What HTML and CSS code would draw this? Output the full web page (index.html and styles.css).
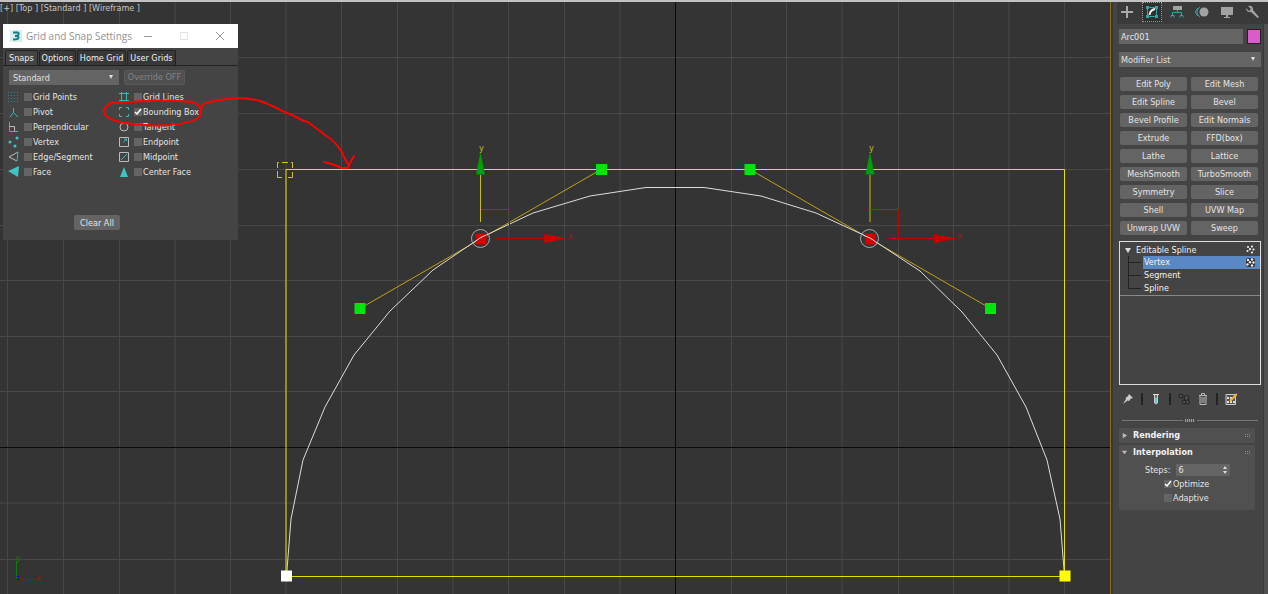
FILE: index.html
```html
<!DOCTYPE html>
<html lang="en">
<head>
<meta charset="utf-8">
<title>Grid and Snap Settings</title>
<link rel="stylesheet" href="styles.css">
</head>
<body>
<div class="app">
<main class="viewport">
  <svg class="scene" viewBox="0 0 1110 594" preserveAspectRatio="xMinYMin slice" aria-label="Top wireframe view">
    <path class="grid" d="M7.5 0V594M63.5 0V594M119.5 0V594M175 0V594M230.5 0V594M286 0V594M341.5 0V594M397.5 0V594M453 0V594M508.5 0V594M564.5 0V594M620 0V594M731.5 0V594M786.5 0V594M842 0V594M898.5 0V594M953.5 0V594M1009 0V594M1064.5 0V594M0 57.5H1110M0 113.5H1110M0 169.5H1110M0 225.5H1110M0 280.5H1110M0 336.5H1110M0 391.5H1110M0 503H1110M0 559.5H1110"/>
    <path class="axis" d="M675.5 0V594M0 447.5H1110"/>
    <path class="tangent" d="M360 308.5 601 169.5M750 169.5 990.5 308.5"/>
    <path class="arc" d="M286.5 576 291 519 303 460 325 407 354 355 390 311 433 270 480 238 533 213 590 196 646 187.5H704L761 196 816 213 870 238 920 271 962 312 997 355 1026 407 1047 460 1060 519 1064.5 576"/>
    <path class="bounds" d="M286 169.5H1064.5V576.5H286Z"/>
    <path class="snap" d="M277.5 168V162.5H279M282 162.5H288M291 162.5H292.5V168M277.5 171V177.5H282M288 177.5H292.5V172"/>
    <path class="handle" d="M596 164h11v11h-11zM744.5 164h11v11h-11zM354.5 303h11v11h-11zM985 303h11v11h-11z"/>
    <g>
      <path class="yellow-line" d="M480.5 175V222"/>
      <path class="green-line" d="M481 209.5H509"/>
      <path class="red-line" d="M509.5 209V238M498 238.5H546"/>
      <path fill="#009e00" d="M480.5 152 485 174.5H476Z"/>
      <path fill="#c90000" d="M567 238.5 544 234V243Z"/>
      <path fill="#d40000" d="M475.5 233.5h11v11h-11z"/>
      <circle cx="480.5" cy="238.5" r="9" fill="none" stroke="#aaa"/>
      <text x="479" y="151" fill="#c5bd20">y</text>
      <text x="568" y="239" fill="#a31515">x</text>
    </g>
    <g>
      <path class="yellow-line" d="M870 175V222"/>
      <path class="green-line" d="M870 209.5H898"/>
      <path class="red-line" d="M898.5 209V238M888 238.5H936"/>
      <path fill="#009e00" d="M870 152 874.5 174.5H865.5Z"/>
      <path fill="#c90000" d="M957 238.5 934 234V243Z"/>
      <path fill="#d40000" d="M865 233.5h11v11h-11z"/>
      <circle cx="869.5" cy="238.5" r="9" fill="none" stroke="#aaa"/>
      <text x="869" y="151" fill="#c5bd20">y</text>
      <text x="957" y="239" fill="#a31515">x</text>
    </g>
    <path class="arc" d="M475 241.5 480 238 486 235M864 235.5 870 238 876 242"/>
    <path fill="#fff" d="M281 570.5h11v11h-11z"/><path fill="#ff0" d="M1059.5 570.5h11v11h-11z"/>
    <path fill="none" stroke="#0b7d0b" d="M16.500 580V561"/><path fill="none" stroke="#9a1010" d="M20 579.5H39"/>
    <path fill="none" stroke="#1515a0" d="M16.500 576.5H19.5L16.500 579.5H19.5"/>
    <text x="16" y="561" fill="#0b7d0b">y</text><text x="36" y="581" fill="#9a1010">x</text>
  </svg>
  <div class="view-label">[+] [Top ] [Standard ] [Wireframe ]</div>

  <section class="dialog" aria-label="Grid and Snap Settings">
    <header class="titlebar">
      <svg class="logo" viewBox="0 0 12 12"><path fill="#d9eeee" d="M0 0h12v12H0z"/><path fill="none" stroke="#0c7f86" stroke-width="2" d="M3 2.5H7.5Q9 2.5 8.5 4.500 8 6 5 6 9 6 8.5 8 8 9.5 3 9.5"/></svg>
      <h1>Grid and Snap Settings</h1>
      <button class="win" aria-label="Minimize"><svg viewBox="0 0 10 10"><path d="M1 5.5H9"/></svg></button>
      <button class="win dim" aria-label="Maximize"><svg viewBox="0 0 10 10"><path d="M1.5 1.5H8.5V8.5H1.5Z"/></svg></button>
      <button class="win" aria-label="Close"><svg viewBox="0 0 10 10"><path d="M1 1 9 9M9 1 1 9"/></svg></button>
    </header>
    <nav class="tabs"><button class="active">Snaps</button><button>Options</button><button>Home Grid</button><button>User Grids</button></nav>
    <div class="presets">
      <select class="drop" aria-label="Snap type"><option>Standard</option></select>
      <button class="off" disabled>Override OFF</button>
    </div>
    <div class="snaps">
      <div class="col">
        <label><svg class="faint" viewBox="0 0 12 12"><path stroke-dasharray="1 2" d="M0 1.5H12M0 4.5H12M0 7.5H12M0 10.5H12"/></svg><input type="checkbox">Grid Points</label>
        <label><svg viewBox="0 0 12 12"><path d="M5.5 2V6.5L2 11M5.5 6.5 10 11"/></svg><input type="checkbox">Pivot</label>
        <label><svg viewBox="0 0 12 12"><path d="M1.5 1V10.5H10"/><path class="gray" d="M1.5 5.5H6.5V10"/></svg><input type="checkbox">Perpendicular</label>
        <label><svg viewBox="0 0 12 12"><g class="solid"><circle cx="2" cy="6" r="1.5"/><circle cx="9" cy="2" r="1.5"/><circle cx="7" cy="10" r="1.5"/></g></svg><input type="checkbox">Vertex</label>
        <label><svg viewBox="0 0 12 12"><path class="gray" d="M10 1 1 6 9 10"/><path d="M10 1 9 10"/></svg><input type="checkbox">Edge/Segment</label>
        <label><svg viewBox="0 0 12 12"><path class="solid" d="M11 0 10 11 0 5Z"/></svg><input type="checkbox">Face</label>
      </div>
      <div class="col">
        <label><svg viewBox="0 0 12 12"><path d="M3.5 1V11M8.5 1V11M1 2.5H11M1 9.5H11"/></svg><input type="checkbox">Grid Lines</label>
        <label><svg viewBox="0 0 12 12"><path d="M4 1.5H1.5V4M8 1.5H10.5V4M1.5 8V10.5H4M10.5 8V10.5H8"/></svg><input type="checkbox" checked>Bounding Box</label>
        <label><svg viewBox="0 0 12 12"><circle class="gray" cx="6" cy="6" r="4"/></svg><input type="checkbox">Tangent</label>
        <label><svg viewBox="0 0 12 12"><path class="gray" d="M1.5 1.5H10.5V10.5H1.5Z"/><path d="M5 6.5 8.5 3M6 3H8.5V5"/></svg><input type="checkbox">Endpoint</label>
        <label><svg viewBox="0 0 12 12"><path class="gray" d="M1.5 1.5H10.5V10.5H1.5Z"/><path d="M3 9 9 3"/></svg><input type="checkbox">Midpoint</label>
        <label><svg viewBox="0 0 12 12"><path class="solid" d="M6 1 10 11H2Z"/></svg><input type="checkbox">Center Face</label>
      </div>
    </div>
    <button class="clear">Clear All</button>
  </section>

  <svg class="scene ink" viewBox="0 0 1110 594" preserveAspectRatio="xMinYMin slice" aria-hidden="true"><path d="M113 102C107 105 103 109 104 113 108 121 124 124 145 125 170 127 195 123 200 116 203 108 199 104 192 102 172 99 137 101 113 103M201 112C201 106 202 104 206 103 226 98 246 97 260 101 275 106 282 112 292 115L304 121 308 122 325 135C332 139 341 148 344 157L349 166M324 162 332 164 342 168H348L350 163 354 156"/></svg>
</main>

<aside class="panel">
  <nav class="modes">
    <button aria-label="Create"><svg viewBox="0 0 14 14"><path class="bright" d="M7 1V13M1 7H13"/></svg></button>
    <button class="active" aria-label="Modify"><svg viewBox="0 0 14 14"><path class="teal" d="M2.5 2.5H11.5V11.5H2.5Z"/><path class="tealfill" d="M1 1h3v3H1zM10 1h3v3h-3zM1 10h3v3H1zM10 10h3v3h-3z"/><path class="white" d="M4.5 10Q5 5 10 4"/></svg></button>
    <button aria-label="Hierarchy"><svg viewBox="0 0 14 14"><path class="fill" d="M3 1h9v4H3z"/><path class="teal" d="M7.5 5V8M2.5 10V7.5H11.5V10M1 12.5V10.5H4V12.5M10 12.5V10.5H13V12.5"/></svg></button>
    <button aria-label="Motion"><svg viewBox="0 0 14 14"><circle class="fill" cx="9" cy="7" r="4.500"/><path class="teal" d="M5 2Q-1 7 5 12M3 3Q-2 7 3 11"/></svg></button>
    <button aria-label="Display"><svg viewBox="0 0 14 14"><path class="fill" d="M1 2h12v8H1zM6 10h2v2h2v1H4v-1h2z"/></svg></button>
    <button aria-label="Utilities"><svg viewBox="0 0 14 14"><path class="fill" d="M1 3 4 6 6 4 3 1Q7 0 8 3V5L14 12 12.5 13 6 7H4Q1 6 1 3Z"/></svg></button>
  </nav>
  <div class="body">
    <div class="content">
      <div class="name"><input type="text" value="Arc001" aria-label="Object name"><button class="swatch" aria-label="Object color"></button></div>
      <select class="drop" aria-label="Modifier List"><option>Modifier List</option></select>
      <div class="mods">
        <button>Edit Poly</button><button>Edit Mesh</button><button>Edit Spline</button><button>Bevel</button><button>Bevel Profile</button><button>Edit Normals</button><button>Extrude</button><button>FFD(box)</button><button>Lathe</button><button>Lattice</button><button>MeshSmooth</button><button>TurboSmooth</button><button>Symmetry</button><button>Slice</button><button>Shell</button><button>UVW Map</button><button>Unwrap UVW</button><button>Sweep</button>
      </div>
      <div class="stack">
        <div class="item root"><svg class="tri" viewBox="0 0 8 8"><path d="M1 2H7L4 7Z"/></svg><span>Editable Spline</span><svg class="dots" viewBox="0 0 9 9"><g><circle cx="2" cy="2" r="1.100"/><circle cx="6" cy="1.500" r="1.100"/><circle cx="4" cy="4.200" r="1.100"/><circle cx="7.500" cy="4.500" r="1.100"/><circle cx="1.500" cy="6" r="1.100"/><circle cx="6" cy="7.500" r="1.100"/></g></svg></div>
        <ul class="subs">
          <li class="item selected"><span>Vertex</span><svg class="dots" viewBox="0 0 9 9"><rect class="shade" width="9" height="9" rx="2"/><g><circle cx="2" cy="2" r="1.200"/><circle cx="6" cy="1.500" r="1.200"/><circle cx="4" cy="4.200" r="1.200"/><circle cx="7.500" cy="4.500" r="1.200"/><circle cx="1.500" cy="6.500" r="1.200"/><circle cx="6" cy="7.500" r="1.200"/></g></svg></li>
          <li class="item"><span>Segment</span></li>
          <li class="item"><span>Spline</span></li>
        </ul>
      </div>
      <div class="tools">
        <button aria-label="Pin stack"><svg viewBox="0 0 12 12"><path fill="#ccc" d="M7 1 11 5 9 5.5 7 8 5.5 7.5 1 11 4 6 3.5 5 6 3Z"/></svg></button>
        <i></i>
        <button aria-label="Show end result"><svg viewBox="0 0 12 12"><path fill="#777" stroke="#ccc" d="M4.5 1.5h3V10Q6 12 4.5 10Z"/><path fill="#62c9d0" d="M5 5h2v5H5z"/><path stroke="#ddd" d="M3 1.5H9"/></svg></button>
        <i></i>
        <button aria-label="Make unique"><svg viewBox="0 0 12 12"><g fill="#4c4c4c" stroke="#222"><circle cx="3" cy="3" r="2"/><circle cx="8.5" cy="5" r="2.5"/><circle cx="6" cy="9" r="2"/><circle cx="9.5" cy="9" r="2"/></g></svg></button>
        <button aria-label="Remove modifier"><svg viewBox="0 0 12 12"><path fill="none" stroke="#bbb" d="M2 2.5H10M4.5 2V.5H7.5V2M3 3V11.5H9V3M5 4V10M7 4V10"/></svg></button>
        <i></i>
        <button aria-label="Configure modifier sets"><svg viewBox="0 0 12 12"><path fill="#555" stroke="#ccc" d="M1 1.5H10.5V11.5H1Z"/><path fill="#ddd" d="M2 4h2v2H2zM5 4h2v2H5zM2 8h2v2H2zM5 8h2v2H5zM8 8h2v2H8z"/><path stroke="#f4b42c" stroke-width="2" d="M5 8 12 1"/></svg></button>
      </div>
      <div class="split"><b></b></div>
      <section class="rollout"><h2><svg class="tri" viewBox="0 0 8 8"><path d="M2 1 7 4 2 7Z"/></svg>Rendering<em></em></h2></section>
      <section class="rollout"><h2><svg class="tri" viewBox="0 0 8 8"><path d="M1 2H7L4 6Z"/></svg>Interpolation<em></em></h2>
        <div class="params">
          <label class="steps">Steps:<span class="spin"><input type="text" value="6"><svg viewBox="0 0 6 10"><path d="M1 4 3 1 5 4ZM1 6H5L3 9Z"/></svg></span></label>
          <label class="opt"><input type="checkbox" checked>Optimize</label>
          <label class="opt"><input type="checkbox">Adaptive</label>
        </div>
      </section>
    </div>
    <div class="rail"></div>
  </div>
</aside>
</div>
</body>
</html>
```
FILE: styles.css
```css
* { box-sizing: border-box; }
body { margin: 0; background: #444; color: #e4e4e4; font: 9px/14px "DejaVu Sans Condensed", "DejaVu Sans", sans-serif; }
button, input, select { font: inherit; color: inherit; margin: 0; padding: 0; border: 0; border-radius: 0; background: none; }
h1, h2, ul { margin: 0; padding: 0; list-style: none; }
svg { display: block; flex: none; }
.app { display: flex; min-height: 100vh; border-top: 2px solid #c2c2c2; }
.viewport { position: relative; flex: 1; overflow: hidden; background: #343434; border-right: 1px solid #8b6d1a; }
.scene { position: absolute; left: 0; top: -2px; width: 100%; height: 100vh; }
.scene text { font-size: 9px; }
.grid { stroke: #484848; }
.axis { stroke: #0a0a0a; }
.bounds, .snap { fill: none; stroke: #e4e000; }
.snap { stroke: #cfc81c; }
.tangent { stroke: #bfa01c; }
.arc { fill: none; stroke: #dcdcdc; }
.handle { fill: #00e60c; }
.yellow-line { stroke: #c4bd0c; }
.green-line { stroke: #0b780b; }
.red-line { stroke: #b40808; }
.ink { pointer-events: none; fill: none; stroke: #f00; stroke-width: 2; stroke-linejoin: round; stroke-linecap: round; }
.view-label { position: absolute; left: 0; top: -2px; color: #c4c4c4; line-height: 16px; white-space: nowrap; }

.dialog { position: absolute; left: 3px; top: 22px; width: 235px; padding-bottom: 10px; background: #444; }
.titlebar { display: flex; align-items: center; height: 24px; padding: 0 13px 0 7px; background: #fff; color: #929292; }
.logo { width: 12px; height: 12px; margin-right: 4px; }
.titlebar h1 { flex: 1; margin-top: -1px; font: 9px/22px "Open Sans", sans-serif; white-space: nowrap; }
.titlebar h1 { font-size: 10px; margin-top: 0; }
.win { width: 10px; height: 10px; margin-left: 26px; }
.win:first-of-type { margin-left: 0; }
.win svg { width: 10px; height: 10px; fill: none; stroke: #999; }
.dim svg { stroke: #e4e4e4; }
.tabs { display: flex; gap: 1px; margin-top: 2px; padding-left: 2px; border-bottom: 1px solid #222; }
.tabs button { height: 15px; padding: 0 2px; background: #383838; border: 1px solid #222; border-bottom: 0; border-radius: 2px 2px 0 0; color: #f0f0f0; white-space: nowrap; }
.tabs .active { padding: 0 3px; background: #444; }
.presets { display: flex; gap: 5px; padding: 4px 6px; }
.drop { appearance: none; width: 100%; height: 15px; padding: 0 4px; background: #646464 url("data:image/svg+xml,%3Csvg xmlns='http://www.w3.org/2000/svg' viewBox='0 0 6 5'%3E%3Cpath fill='%23ddd' d='M1 0H5L3 4Z'/%3E%3C/svg%3E") no-repeat right 5px center / 6px 5px; color: #e0e0e0; }
.presets .drop { width: 110px; }
.off { width: 61px; height: 15px; background: #505050; border: 1px solid #5a5a5a; border-radius: 2px; color: #858585; line-height: 13px; white-space: nowrap; }
.snaps { display: flex; padding-left: 5px; }
.col { width: 110px; }
.snaps label { display: flex; align-items: center; height: 15px; white-space: nowrap; }
.snaps svg { width: 12px; height: 12px; margin-right: 4px; fill: none; stroke: #3fb5b5; }
.snaps .faint { stroke: #2f8282; }
.snaps .gray { stroke: #bbb; }
.snaps .solid { fill: #42c3c3; stroke: none; }
input[type="checkbox"] { appearance: none; flex: none; width: 8px; height: 8px; margin-right: 1px; background: #646464; }
input[type="checkbox"]:checked { background: #646464 url("data:image/svg+xml,%3Csvg xmlns='http://www.w3.org/2000/svg' viewBox='0 0 8 8'%3E%3Cpath fill='none' stroke='white' stroke-width='1.5' d='M1 4L3 6L7 1'/%3E%3C/svg%3E") center / 8px 8px; }
.clear { display: block; width: 46px; height: 15px; margin: 36px 0 0 71px; background: #646464; border-radius: 2px; }

.panel { display: flex; flex-direction: column; width: 157px; padding-left: 5px; background: #444; border-left: 2px solid #383838; }
.modes { display: flex; gap: 5px; height: 22px; margin-left: -1px; background: #3a3a3a; }
.modes button { display: grid; place-items: center; width: 20px; height: 20px; }
.modes .active { border: 1px dotted #999; background: #303030; }
.modes svg { width: 14px; height: 14px; fill: none; }
.bright { stroke: #aaa; stroke-width: 2; }
.teal { stroke: #36a3a3; }
.tealfill { fill: #36a3a3; }
.white { stroke: #eee; stroke-width: 2; }
.fill { fill: #a2a2a2; }
.body { display: flex; flex: 1; }
.content { flex: 1; padding: 5px 2px 0 1px; }
.name { display: flex; gap: 4px; margin-bottom: 8px; }
.name input { flex: 1; min-width: 0; height: 15px; padding: 0 2px; background: #646464; }
.swatch { width: 14px; height: 15px; background: #d95cc8; border: 1px solid #222; }
.content > .drop { display: block; padding: 0 2px; }
.mods { display: grid; grid-template-columns: 1fr 1fr; gap: 4px; padding: 10px 3px 0 1px; }
.mods button { height: 14px; background: #646464; border-radius: 2px; white-space: nowrap; }
.stack { height: 144px; margin-top: 6px; padding-top: 1px; border: 1px solid #ddd; }
.item { display: flex; align-items: center; justify-content: space-between; height: 13px; padding-right: 5px; color: #f2f2f2; }
.root { padding-left: 4px; }
.root span { flex: 1; padding-left: 4px; }
.tri { width: 8px; height: 8px; fill: #ddd; }
.dots { width: 9px; height: 9px; fill: #eee; }
.shade { fill: #333; }
.subs { padding-left: 8px; border-bottom: 1px solid #888; }
.subs .item::before { content: ""; width: 13px; height: 13px; margin-right: 2px; background: linear-gradient(#222, #222) 0 6px / 13px 1px no-repeat, linear-gradient(#222, #222) 0 0 / 1px 13px no-repeat; }
.subs .item:last-child::before { background-size: 13px 1px, 1px 7px; }
.subs span { flex: 1; padding-left: 1px; line-height: 13px; }
.selected { background: linear-gradient(#5a88c4, #5a88c4) right / calc(100% - 15px) 100% no-repeat; }
.tools { display: flex; align-items: center; height: 27px; padding-left: 3px; gap: 7px; }
.tools button, .tools svg { width: 12px; height: 12px; }
.tools svg { fill: none; }
.tools i { width: 2px; height: 12px; background: #242424; }
.split { display: flex; align-items: center; height: 16px; margin: 0 3px; background: linear-gradient(#777, #777) center / 100% 1px no-repeat; }
.split b { width: 14px; height: 3px; margin: 0 auto; border: solid #444; border-width: 0 2px; background: repeating-linear-gradient(90deg, #999 0 1px, #555 1px 2px); }
.rollout { margin: 0 6px 2px 0; background: #505050; border-radius: 2px; }
.rollout h2 { display: flex; align-items: center; height: 15px; padding: 0 5px 0 2px; font: bold 9px/15px "DejaVu Sans Condensed", "DejaVu Sans", sans-serif; color: #f2f2f2; }
.rollout .tri { margin-right: 5px; width: 7px; height: 7px; fill: #bbb; }
.rollout em { width: 5px; height: 5px; margin-left: auto; background: repeating-linear-gradient(#505050 0 1px, transparent 1px 2px), repeating-linear-gradient(90deg, #888 0 1px, #505050 1px 2px); }
.params { padding: 3px 0 5px 26px; }
.steps, .opt { display: flex; align-items: center; height: 14px; }
.spin { display: flex; align-items: center; width: 54px; height: 12px; margin-left: 6px; padding-right: 2px; background: #646464; }
.spin input { flex: 1; min-width: 0; padding-left: 2px; height: 12px; }
.spin svg { width: 6px; height: 10px; fill: #ddd; }
.opt { padding-left: 19px; }
.rail { width: 5px; background: #505050; border-left: 1px solid #393939; }
```
